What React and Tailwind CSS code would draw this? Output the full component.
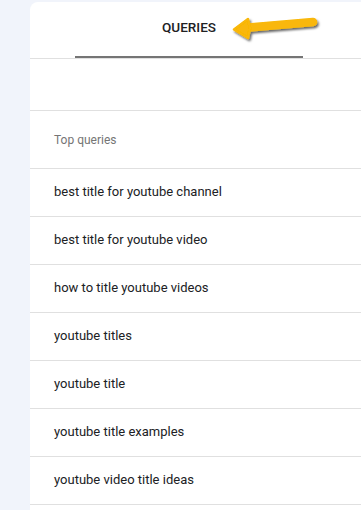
const queries = [
  "best title for youtube channel",
  "best title for youtube video",
  "how to title youtube videos",
  "youtube titles",
  "youtube title",
  "youtube title examples",
  "youtube video title ideas",
];

// yellow annotation arrow drawn over the tab header
const Arrow = () => (
  <svg
    width="96"
    height="34"
    viewBox="0 0 96 34"
    className="absolute left-[200px] top-[8px]"
  >
    <defs>
      <filter id="sh" x="-20%" y="-40%" width="150%" height="200%">
        <feDropShadow dx="1.5" dy="2" stdDeviation="1.3" floodColor="#000" floodOpacity="0.6" />
      </filter>
    </defs>
    <g filter="url(#sh)" fill="#f9b707" stroke="#f9b707">
      <path d="M83 12 L19 17.5" strokeWidth="8.5" strokeLinecap="round" fill="none" />
      <path d="M4 19.5 L18 9 L20 18 L18 28 Z" strokeLinejoin="round" strokeWidth="2.5" />
    </g>
  </svg>
);

export default function App() {
  return (
    <div className="w-[361px] h-[510px] overflow-hidden bg-[#f1f4fb] pt-[2px] pl-[30px] font-['Roboto',sans-serif]">
      <div className="bg-white rounded-tl-lg h-full relative flex flex-col">
        <div className="h-[57px] shrink-0 border-b border-[#e0e0e0] flex pl-[45px]">
          <div className="w-[228px] flex flex-col items-center justify-between border-b-2 border-[#757575] pt-[15px]">
            <span className="text-[13.5px] font-medium text-[#202124]">QUERIES</span>
          </div>
        </div>
        <Arrow />
        <div className="h-[52px] shrink-0 border-b border-[#e0e0e0]" />
        <div className="h-[58px] shrink-0 border-b border-[#e0e0e0] flex items-center pl-[24px]">
          <span className="text-[12px] text-[#757575]">Top queries</span>
        </div>
        {queries.map((q) => (
          <div
            key={q}
            className="h-[48px] shrink-0 border-b border-[#e0e0e0] flex items-center pl-[24px] pb-[2px]"
          >
            <span className="text-[13px] text-[#202124]">{q}</span>
          </div>
        ))}
      </div>
    </div>
  );
}
